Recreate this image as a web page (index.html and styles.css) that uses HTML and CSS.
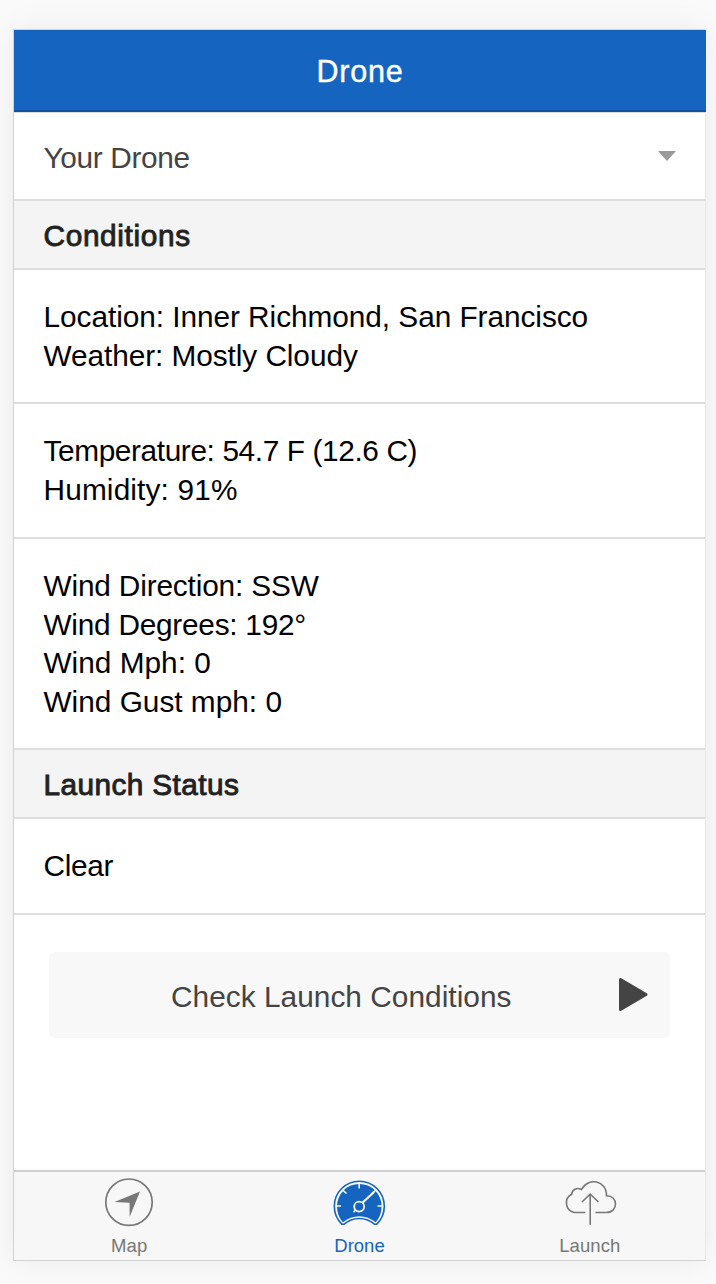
FILE: index.html
```html
<!DOCTYPE html>
<html lang="en">
<head>
<meta charset="utf-8">
<title>Drone</title>
<link rel="stylesheet" href="styles.css">
</head>
<body>
<div class="phone">
  <header class="bar"><h1 class="title">Drone</h1></header>
  <main class="content">
    <div class="item select"><span>Your Drone</span><span class="caret"></span></div>
    <h2 class="divider conditions">Conditions</h2>
    <div class="item info">
      <p class="location">Location: Inner Richmond, San Francisco</p>
      <p class="weather">Weather: Mostly Cloudy</p>
    </div>
    <div class="item info">
      <p class="temperature">Temperature: 54.7 F (12.6 C)</p>
      <p class="humidity">Humidity: 91%</p>
    </div>
    <div class="item info winds">
      <p class="direction">Wind Direction: SSW</p>
      <p class="degrees">Wind Degrees: 192°</p>
      <p>Wind Mph: 0</p>
      <p>Wind Gust mph: 0</p>
    </div>
    <h2 class="divider status">Launch Status</h2>
    <div class="item clear"><p>Clear</p></div>
    <button class="check">
      <span>Check Launch Conditions</span>
      <svg class="play" width="30" height="36" viewBox="0 0 30 36"><path d="M2.5 3.5v30L28 18.5Z" fill="#444" stroke="#444" stroke-width="3" stroke-linejoin="round"/></svg>
    </button>
  </main>
  <nav class="tabs">
    <a class="tab">
      <svg width="56" height="54" viewBox="0 0 56 54"><circle cx="28" cy="27.2" r="23.2" fill="none" stroke="currentColor" stroke-width="1.7"/><path d="M39 16.5 28.6 42V27.8L13.5 27Z" fill="currentColor"/></svg>
      <span>Map</span>
    </a>
    <a class="tab active">
      <svg width="56" height="54" viewBox="0 0 56 54">
        <path d="M11 49.3C6 44.5 3.3 38.5 3.3 31.2a25 25 0 0 1 50 0c0 7.3-2.7 13.3-7.7 18.1h-1.8c-9-7.8-22-7.8-31 0Z" fill="#f7f7f7" stroke="currentColor" stroke-width="1.6" stroke-linejoin="round"/>
        <path d="M11.8 47.2C8 43 6 37.5 6 31.2a22.3 22.3 0 0 1 44.6 0c0 6.3-2 11.8-5.8 16-10-8-23-8-33 0Z" fill="currentColor"/>
        <g fill="none" stroke="#f7f7f7" stroke-width="1.6"><path d="M28.2 8v5.5M5 31h5M46.5 31h5M11.5 14.8l4 3.7M41 18.5l4-3.7"/><path d="M31.2 28 43 17" stroke-width="2.2"/><circle cx="28.2" cy="31.6" r="5" stroke-width="1.8"/><path d="m24.5 35-2 2.2"/></g>
      </svg>
      <span>Drone</span>
    </a>
    <a class="tab">
      <svg width="56" height="54" viewBox="0 0 56 54"><path d="M23.3 37.5H12.5A9.7 9.7 0 0 1 9.7 19.3C10 14.6 15 12 19.5 14.5 26 1.7 45 5.4 44.5 20.7 56.5 20.5 56.5 37.5 44.5 37.5H33.5M28.2 49.8V19.5M20 27l8.2-8 8.2 8" fill="none" stroke="currentColor" stroke-width="1.6"/></svg>
      <span>Launch</span>
    </a>
  </nav>
</div>
</body>
</html>
```
FILE: styles.css
```css
* { box-sizing: border-box; margin: 0; }
body {
  height: 1284px;
  padding: 29px 10px 23px 13px;
  overflow: hidden;
  background: #fafafa;
  font-family: "Liberation Sans", Arial, sans-serif;
  font-size: 29.8px;
  line-height: 38.6px;
  color: #000;
}
.phone {
  display: flex;
  flex-direction: column;
  height: 1232px;
  border: 1px solid #d2d2d2;
  border-right-color: #e8e8e8;
  background: #fff;
  box-shadow: 0 0 30px rgba(0, 0, 0, .065);
}
.bar {
  height: 82px;
  margin-right: -1px;
  flex: none;
  background: #1565c0;
  border-bottom: 2px solid #0f519c;
  text-align: center;
}
.title {
  font-size: 30.5px;
  font-weight: 400;
  line-height: 82px;
  letter-spacing: .8px;
  color: #fff;
  -webkit-text-stroke: .4px #fff;
}
.content { flex: 1; border-top: 1px solid #ddd; }
.item { padding: 0 30px 0 29.5px; border-bottom: 2px solid #dedede; }
.select {
  display: flex;
  height: 88px;
  align-items: center;
  justify-content: space-between;
  padding-top: 4px;
  color: #444;
  letter-spacing: -.35px;
}
.caret {
  border: 9px solid transparent;
  border-top: 10px solid #999;
  border-bottom: 0;
  margin-right: -1px;
  margin-bottom: 5px;
}
.divider {
  height: 69px;
  padding: 2px 30px 0 29.5px;
  border-bottom: 2px solid #dedede;
  background: #f4f4f4;
  color: #222;
  font-size: 29.8px;
  font-weight: 400;
  line-height: 66px;
  letter-spacing: .65px;
  -webkit-text-stroke: .9px #222;
}
.status { letter-spacing: .4px; }
.info { height: 135px; padding-top: 28px; }
.info.winds { height: 211px; }
.conditions + .info { height: 134px; padding-top: 28px; }
.location { letter-spacing: -.05px; }
.weather { letter-spacing: -.07px; }
.temperature { letter-spacing: -.38px; }
.humidity { letter-spacing: .15px; }
.direction { letter-spacing: -.16px; }
.degrees { letter-spacing: -.25px; }
.clear { height: 96px; padding-top: 28px; letter-spacing: -.3px; }
.check {
  display: flex;
  width: 621px;
  height: 86px;
  margin: 37px 0 0 35px;
  padding: 4px 22px 0 122px;
  align-items: center;
  justify-content: space-between;
  border: 0;
  border-radius: 6px;
  background: #f8f8f8;
  color: #444;
  font: inherit;
  letter-spacing: .04px;
}
.play { display: block; margin-bottom: 7px; }
.tabs {
  display: flex;
  height: 90px;
  border-top: 2px solid #d0d0d0;
  background: #f7f7f7;
}
.tab {
  display: flex;
  flex: 1;
  flex-direction: column;
  align-items: center;
  padding-top: 3px;
  color: #777;
  font-size: 18.5px;
  line-height: 24px;
  letter-spacing: .1px;
}
.tab span { padding-top: 5px; }
.active { color: #1565c0; letter-spacing: 0; }
```
